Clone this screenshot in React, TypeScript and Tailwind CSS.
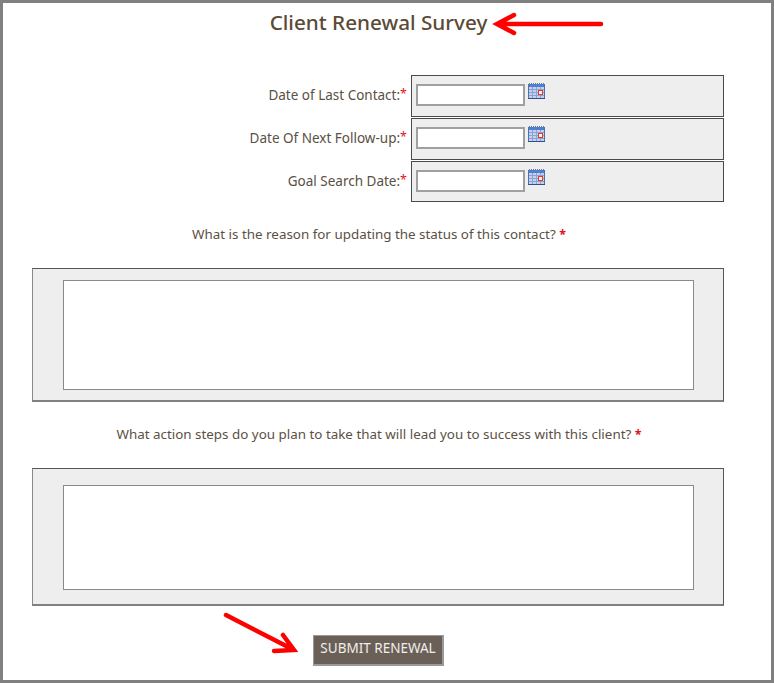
const font = { fontFamily: '"Noto Sans", sans-serif' };

function CalendarIcon() {
  return (
    <svg width="17" height="16" viewBox="0 0 17 16" className="block">
      <rect x="0.5" y="1" width="16" height="14" fill="#c4d1ee" />
      <path d="M1 .5h15" stroke="#77787f" strokeWidth="1" strokeDasharray="1 1" />
      <rect x="0.5" y="1" width="16" height="3" fill="#4f7fd0" />
      <path d="M1 6.500h15M1 9.500h15M1 12.500h15M4.500 4v11M8.500 4v11M12.500 4v11" stroke="#8aa2d8" strokeWidth="1" />
      <rect x="0" y="15" width="17" height="1" fill="#2f4f86" />
      <path d="M.5 1v14M16.500 1v14" stroke="#4f70ac" strokeWidth="1" />
      <rect x="10.500" y="7.500" width="4" height="4" fill="#fff" stroke="#e8391c" strokeWidth="1" />
    </svg>
  );
}

function DateRow({ label, h, pb }: { label: string; h: string; pb: string }) {
  return (
    <div className="flex items-stretch">
      <div className={`w-[408px] pr-[4px] ${pb} flex items-center justify-end text-[13.500px] text-[#5b5044]`}>
        <span>{label}:</span>
        <span className="text-[#e0101c] text-[12.500px] relative -top-[1px]">*</span>
      </div>
      <div className={`w-[313px] ${h} border border-[#4a4a4a] bg-[#eeeeee] pl-[4px] pt-[7px] flex items-start`}>
        <div className="mt-[1px] w-[109px] h-[22px] bg-white border-2 border-[#a0a0a0]" />
        <div className="ml-[3px]">
          <CalendarIcon />
        </div>
      </div>
    </div>
  );
}

function TextBlock({ outer, inner, pt }: { outer: string; inner: string; pt: string }) {
  return (
    <div className={`ml-[29px] w-[692px] ${outer} ${pt} border border-t-[#555555] border-r-[#555555] border-l-[#888888] border-b-2 border-b-[#808080] bg-[#eeeeee] pl-[30px]`}>
      <div className={`w-[631px] ${inner} bg-white border border-[#8a8a8a]`} />
    </div>
  );
}

export default function App() {
  return (
    <div style={font} className="relative w-[774px] h-[683px] bg-white border-[3px] border-[#808080] overflow-hidden">
      <h1 className="h-[40px] pt-[2px] pr-[17px] text-center text-[20.700px] leading-[34px] font-medium text-[#5a4a36]">
        Client Renewal Survey
      </h1>
      <div className="mt-[32px] flex flex-col gap-px">
        <DateRow label="Date of Last Contact" h="h-[42px]" pb="pb-[2px]" />
        <DateRow label="Date Of Next Follow-up" h="h-[42px]" pb="pb-[2px]" />
        <DateRow label="Goal Search Date" h="h-[41px]" pb="pb-0" />
      </div>
      <p className="h-[66px] pt-[21px] pr-[16px] text-center text-[13.400px] leading-[22px] text-[#5b5044]">
        What is the reason for updating the status of this contact? <span className="text-[#e0101c] font-bold text-[12.500px]">*</span>
      </p>
      <TextBlock outer="h-[134px]" inner="h-[110px]" pt="pt-[11px]" />
      <p className="h-[66px] pt-[21px] pr-[16px] text-center text-[13.400px] leading-[22px] text-[#5b5044]">
        What action steps do you plan to take that will lead you to success with this client? <span className="text-[#e0101c] font-bold text-[12.500px]">*</span>
      </p>
      <TextBlock outer="h-[138px]" inner="h-[105px]" pt="pt-[16px]" />
      <div className="mt-[29px] flex justify-start pl-[310px]">
        <button className="w-[131px] h-[31px] pb-[3px] bg-[#6b6058] text-[#f2eee8] text-[13.500px] border border-[#9a9a9a] border-r-2 border-b-2">
          SUBMIT RENEWAL
        </button>
      </div>
      <svg className="absolute left-[487px] top-[5px]" width="118" height="32" viewBox="0 0 118 32">
        <path d="M111 16H8M24 7L7 16l17 9" fill="none" stroke="#ff0000" strokeWidth="4.500" strokeLinecap="round" strokeLinejoin="miter" />
      </svg>
      <svg className="absolute left-[215px] top-[606px]" width="85" height="48" viewBox="0 0 85 48">
        <path d="M8 6L76 41M65 26l11 15-20 1" fill="none" stroke="#ff0000" strokeWidth="4.500" strokeLinecap="round" />
      </svg>
    </div>
  );
}
